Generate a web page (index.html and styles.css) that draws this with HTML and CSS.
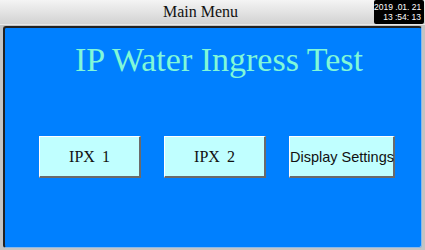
FILE: index.html
```html
<!DOCTYPE html>
<html>
<head>
<meta charset="utf-8">
<link rel="stylesheet" href="styles.css">
</head>
<body>
<div class="screen">
  <header class="topbar">
    <div class="topbar-title">Main Menu</div>
    <div class="clock">
      <div>2019 .01. 21</div>
      <div>13 :54: 13</div>
    </div>
  </header>
  <main class="panel">
    <h1 class="title">IP Water Ingress Test</h1>
    <div class="buttons">
      <button class="btn btn-serif">IPX 1</button>
      <button class="btn btn-serif">IPX 2</button>
      <button class="btn btn-sans">Display Settings</button>
    </div>
  </main>
</div>
</body>
</html>
```
FILE: styles.css
```css
html, body {
  margin: 0;
  padding: 0;
}
body {
  width: 425px;
  height: 250px;
  overflow: hidden;
  background: #c4c4c4;
}
.screen {
  display: flex;
  flex-direction: column;
  width: 425px;
  height: 250px;
}
.topbar {
  height: 25px;
  display: flex;
  align-items: stretch;
  background: linear-gradient(#f4f4f4, #d2d2d2);
  border-bottom: 1px solid #e8e8e8;
  box-sizing: border-box;
}
.topbar-title {
  flex: 1;
  text-align: center;
  padding-left: 27px;
  font-family: "Liberation Serif", serif;
  font-size: 16px;
  line-height: 24px;
  color: #111;
}
.clock {
  width: 50px;
  height: 24px;
  background: #000;
  color: #fff;
  font-family: "Liberation Sans", sans-serif;
  font-size: 8.5px;
  line-height: 10px;
  white-space: nowrap;
  text-align: right;
  padding: 2px 3px 0 0;
  box-sizing: border-box;
  border-radius: 2px;
  margin-right: 1px;
}
.panel {
  margin: 1px 3px 2px 3px;
  flex: 1;
  background: #0080ff;
  border-left: 2px solid #222;
  border-top: 2px solid #222;
  border-right: 1px solid #8ab8e8;
  border-bottom: 1px solid #8ab8e8;
  border-radius: 3px;
  display: flex;
  flex-direction: column;
  align-items: center;
}
.title {
  margin: 14px 0 0 12px;
  font-family: "Liberation Serif", serif;
  font-weight: normal;
  font-size: 34px;
  line-height: 36px;
  color: #80f8d8;
}
.buttons {
  display: flex;
  gap: 23px;
  margin-top: 58px;
  margin-left: 8px;
}
.btn {
  width: 102px;
  height: 42px;
  padding: 0;
  background: #c0ffff;
  border-style: solid;
  border-width: 1px 2px 2px 1px;
  border-color: #ffffff #6a6a6a #6a6a6a #ffffff;
  color: #111;
  white-space: nowrap;
}
.btn-serif {
  font-family: "Liberation Serif", serif;
  font-size: 16px;
  word-spacing: 3px;
}
.btn-sans {
  width: 106px;
  font-family: "Liberation Sans", sans-serif;
  font-size: 14.5px;
}
```
